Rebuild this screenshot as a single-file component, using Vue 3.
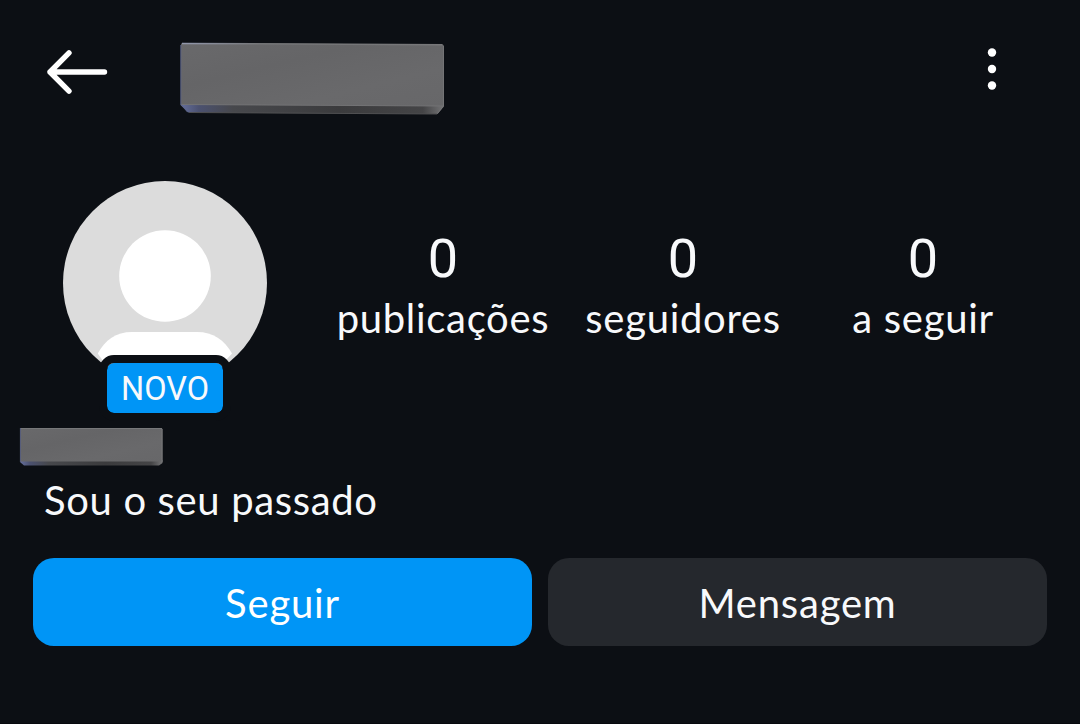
<script setup>
const stats = [
  { key: 'posts', value: '0', label: 'publicações' },
  { key: 'followers', value: '0', label: 'seguidores' },
  { key: 'following', value: '0', label: 'a seguir' },
]
</script>

<template>
  <main class="profile">
    <header class="topbar">
      <svg class="back" width="64" height="48" viewBox="0 0 64 48" aria-label="Voltar">
        <path d="M24 4.800 L5 24 L24 43.200 M5 24 H59.500" />
      </svg>
      <svg class="handle" width="268" height="76" viewBox="0 0 268 76">
        <defs>
          <linearGradient id="face" x1="0" y1="0" x2="1" y2="1">
            <stop offset="0" stop-color="#69696b" />
            <stop offset=".35" stop-color="#656567" />
            <stop offset=".7" stop-color="#69696b" />
            <stop offset="1" stop-color="#676769" />
          </linearGradient>
          <linearGradient id="bevel" x1="0" x2="1">
            <stop offset="0" stop-color="#66709d" />
            <stop offset=".07" stop-color="#4b5170" />
            <stop offset=".2" stop-color="#47484c" />
            <stop offset=".6" stop-color="#3b3b3d" />
            <stop offset=".92" stop-color="#444446" />
            <stop offset="1" stop-color="#747476" />
          </linearGradient>
          <linearGradient id="rim" x1="0" x2="1">
            <stop offset="0" stop-color="#9298ac" />
            <stop offset=".3" stop-color="#747577" />
            <stop offset="1" stop-color="#777779" />
          </linearGradient>
        </defs>
        <path d="M1.500 63 H265 L264.500 66 L258.500 73 L9 71.500 L1.500 64 Z" fill="url(#bevel)" />
        <path d="M3.500 2 L263 3.500 Q265 3.500 265 5.500 V65 L2 63.500 V3.500 Q2 2 3.500 2 Z" fill="url(#face)" />
        <path d="M3 2.500 L263.500 3.800" stroke="url(#rim)" stroke-width="1.500" fill="none" />
        <path d="M1.800 4 V63 L8.500 71" stroke="#5a6388" stroke-width="1" fill="none" />
        <path d="M2.500 63.500 L264.500 65" stroke="#737375" stroke-width="1" fill="none" />
        <path d="M264.500 5 V65 L258.500 72.500" stroke="#747476" stroke-width="1" fill="none" />
        <path d="M10 71.500 L258 73" stroke="#505052" stroke-width="1" />
      </svg>
      <svg class="more" width="12" height="44" viewBox="0 0 12 44" aria-label="Mais">
        <circle cx="6" cy="5.500" r="4.200" />
        <circle cx="6" cy="22" r="4.200" />
        <circle cx="6" cy="38.500" r="4.200" />
      </svg>
    </header>

    <section class="summary">
      <div class="avatar">
        <svg width="204" height="204" viewBox="0 0 204 204">
          <defs><clipPath id="disc"><circle cx="102" cy="102" r="102" /></clipPath></defs>
          <g clip-path="url(#disc)">
            <rect width="204" height="204" fill="#dcdcdc" />
            <circle cx="102" cy="95" r="45.800" fill="#fff" />
            <path d="M34.800 172.500 C42 159 53 151 69 151 H134 C150 151 161.500 159 169 172.500 L162 180 H40 Z" fill="#fff" />
          </g>
        </svg>
        <span class="badge">NOVO</span>
      </div>
      <ul class="stats">
        <li v-for="s in stats" :key="s.key">
          <strong>{{ s.value }}</strong>
          <span>{{ s.label }}</span>
        </li>
      </ul>
    </section>

    <svg class="name" width="145" height="40" viewBox="0 0 145 40">
      <path d="M1 33 H143.500 V36 L140 38.500 H5 L1 35 Z" fill="url(#bevel)" />
      <path d="M1 1 H142 Q143.500 1 143.500 2.500 V34.500 H1 Z" fill="url(#face)" />
      <path d="M1 1.500 H143" stroke="#77787a" stroke-width="1" />
      <path d="M1.400 1 V35" stroke="#555c7d" stroke-width="1" />
      <path d="M143 2 V35" stroke="#777779" stroke-width="1" />
    </svg>
    <p class="bio">Sou o seu passado</p>

    <div class="actions">
      <button class="follow">Seguir</button>
      <button class="message">Mensagem</button>
    </div>
  </main>
</template>

<style>
body { background: #0c0f14; }
</style>

<style scoped>
.profile {
  box-sizing: border-box;
  width: 1080px;
  height: 724px;
  overflow: hidden;
  background: #0c0f14;
  color: #f8f9fb;
  font-family: Lato, "Open Sans", sans-serif;
  border-bottom: 1px solid #07090e;
}
.topbar {
  display: flex;
  align-items: flex-start;
  height: 181px;
  padding: 41px 82px 0 45px;
  box-sizing: border-box;
}
.back { margin-top: 7px; fill: none; stroke: #fff; stroke-width: 5.400; stroke-linecap: round; stroke-linejoin: round; }
.handle { margin-left: 70px; }
.more { margin: 6px 0 0 auto; fill: #fff; }
.summary { display: flex; height: 246px; padding-left: 63px; }
.avatar { position: relative; width: 204px; height: 236px; }
.avatar svg { display: block; }
.badge {
  position: absolute;
  left: 36px;
  top: 174px;
  width: 116px;
  height: 50px;
  border: 8px solid #0c0f14;
  border-radius: 15px;
  background: #0095f6;
  background-clip: padding-box;
  text-align: center;
  font-family: Roboto, sans-serif;
  font-size: 32.5px;
  line-height: 53px;
}
.stats {
  display: grid;
  grid-template-columns: 240px 240px 240px;
  margin: 50px 0 0 56px;
  padding: 0;
  list-style: none;
}
.stats li { display: flex; flex-direction: column; align-items: center; }
.stats strong { font-family: Roboto, sans-serif; font-size: 54px; line-height: 56px; font-weight: 400; }
.stats span { font-size: 40px; line-height: 48px; margin-top: 7px; letter-spacing: 0.7px; white-space: nowrap; }
.name { display: block; margin-left: 19px; }
.bio { margin: 9px 0 0 44px; font-size: 40px; line-height: 48px; letter-spacing: 0.65px; }
.actions { display: grid; grid-template-columns: 499px 499px; gap: 16px; margin: 34px 0 0 33px; }
.actions button {
  height: 88px;
  padding: 2px 0 0;
  border: 0;
  border-radius: 21px;
  font: 400 40px/86px Lato, "Open Sans", sans-serif;
  letter-spacing: 0.8px;
  color: #f8f9fb;
}
.actions .follow { background: #0095f6; color: #fff; }
.actions .message { background: #25282d; }
</style>
